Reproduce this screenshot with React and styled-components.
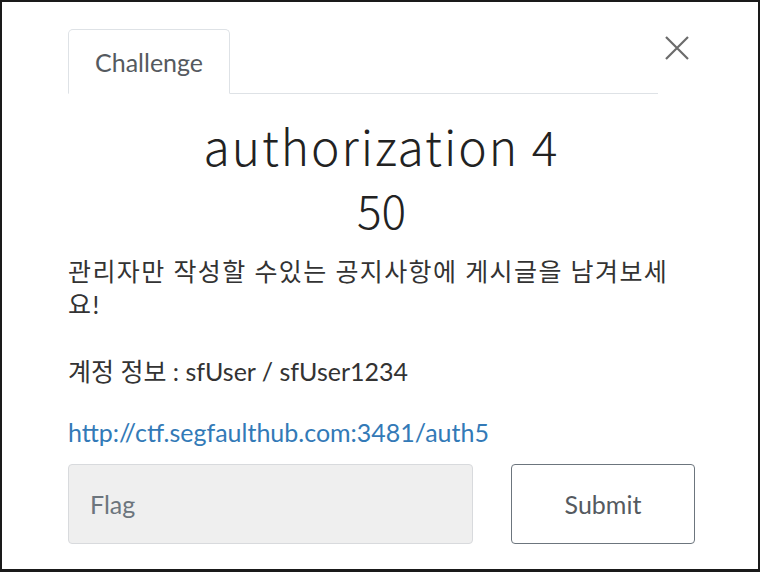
import React from "react";
import styled, { createGlobalStyle } from "styled-components";

const Global = createGlobalStyle`
  html, body { margin: 0; padding: 0; background: #fff; }
  * { box-sizing: border-box; }
`;

const Frame = styled.div`
  width: 760px;
  height: 572px;
  border: 2px solid #1a1a1a;
  border-bottom-width: 3px;
  background: #fff;
  padding: 0 63px 0 66px;
  font-family: Lato, "Noto Sans CJK KR", sans-serif;
  color: #333;
  overflow: hidden;
`;

const Header = styled.div`
  display: flex;
  align-items: flex-start;
  padding-top: 27px;
`;

const Tabs = styled.div`
  flex: 1;
  display: flex;
  border-bottom: 1px solid #dee2e6;
  margin-right: 6px;
`;

const Tab = styled.div`
  height: 65px;
  padding: 0 26px;
  display: flex;
  align-items: center;
  font-size: 25px;
  color: #555a60;
  border: 1px solid #dee2e6;
  border-bottom-color: #fff;
  border-radius: 5px 5px 0 0;
  margin-bottom: -1px;
  background: #fff;
`;

const Close = styled.button`
  border: 0;
  background: transparent;
  padding: 0;
  margin: 6px 5px 0 0;
  width: 26px;
  height: 26px;
  cursor: pointer;
  display: flex;
  align-items: center;
  justify-content: center;
`;

const Title = styled.h2`
  margin: 21px 0 0;
  text-align: center;
  font-family: "Noto Sans CJK KR", sans-serif;
  font-weight: 300;
  font-size: 48px;
  line-height: 60px;
  letter-spacing: 2px;
  color: #222;
`;

const Points = styled.h3`
  margin: 6px 0 0;
  text-align: center;
  font-family: "Noto Sans CJK KR", sans-serif;
  font-weight: 300;
  font-size: 46px;
  line-height: 56px;
  color: #222;
`;

const Desc = styled.p`
  margin: ${(p) => p.$mt}px 0 0;
  font-size: 25px;
  line-height: 33px;
  letter-spacing: ${(p) => p.$ls || 0}px;
  color: #333;
  word-break: break-all;
`;

const Link = styled.a`
  color: #337ab7;
  text-decoration: none;
`;

const Form = styled.form`
  display: flex;
  gap: 38px;
  margin-top: 15px;
`;

const Input = styled.input`
  flex: 1;
  height: 80px;
  border: 1px solid #d8dadd;
  border-radius: 4px;
  background: #efefef;
  padding: 0 21px;
  font-family: Lato, sans-serif;
  font-size: 25px;
  color: #333;
  &::placeholder { color: #6c757d; }
`;

const Submit = styled.button`
  width: 184px;
  height: 80px;
  border: 1px solid #6c757d;
  border-radius: 4px;
  background: #fff;
  font-family: Lato, sans-serif;
  font-size: 25px;
  color: #555a60;
`;

export default function App() {
  return (
    <>
      <Global />
      <Frame>
        <Header>
          <Tabs>
            <Tab>Challenge</Tab>
          </Tabs>
          <Close aria-label="Close">
            <svg width="24" height="24" viewBox="0 0 24 24">
              <path d="M1 1 L23 23 M23 1 L1 23" stroke="#6b6b6b" strokeWidth="2.2" fill="none" />
            </svg>
          </Close>
        </Header>
        <Title>authorization 4</Title>
        <Points>50</Points>
        <Desc $mt={18} $ls={1.4}>관리자만 작성할 수있는 공지사항에 게시글을 남겨보세요!</Desc>
        <Desc $mt={34}>계정 정보 : sfUser / sfUser1234</Desc>
        <Desc $mt={28}>
          <Link href="#">http://ctf.segfaulthub.com:3481/auth5</Link>
        </Desc>
        <Form onSubmit={(e) => e.preventDefault()}>
          <Input placeholder="Flag" />
          <Submit type="submit">Submit</Submit>
        </Form>
      </Frame>
    </>
  );
}
